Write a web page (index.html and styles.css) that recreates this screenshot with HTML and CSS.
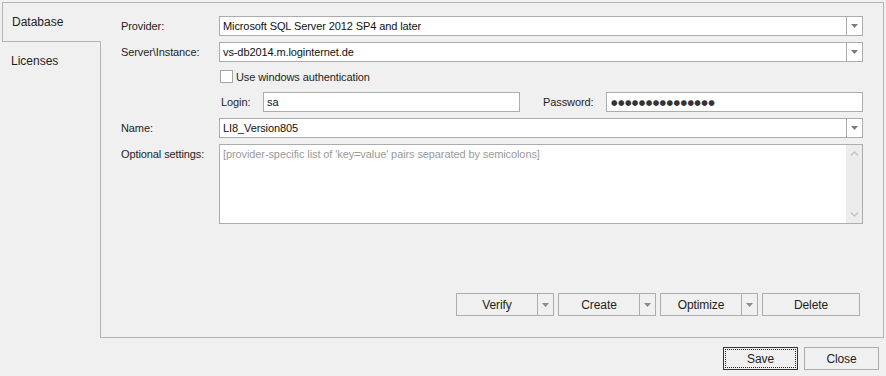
FILE: index.html
```html
<!DOCTYPE html>
<html lang="en">

<head>
  <meta charset="UTF-8" />
  <meta name="viewport" content="width=device-width,initial-scale=1" />
  <title>Database Settings</title>
  <link rel="stylesheet" href="styles.css">
</head>

<body>
  <div class="dialog">
    <div class="tabs">
      <div class="tab-list">
        <div class="tab active">Database</div>
        <div class="tab-rest">
          <div class="tab">Licenses</div>
        </div>
      </div>
      <div class="tab-page">
        <div class="form">
          <div class="row">
            <span class="lbl">Provider:</span>
            <div class="combo">
              <span class="combo-text">Microsoft SQL Server 2012 SP4 and later</span>
              <span class="combo-btn"><svg width="7" height="4" viewBox="0 0 7 4"><path d="M0 0h7L3.5 4z" fill="#7a7a7a" /></svg></span>
            </div>
          </div>
          <div class="row">
            <span class="lbl">Server\Instance:</span>
            <div class="combo">
              <span class="combo-text">vs-db2014.m.loginternet.de</span>
              <span class="combo-btn"><svg width="7" height="4" viewBox="0 0 7 4"><path d="M0 0h7L3.5 4z" fill="#7a7a7a" /></svg></span>
            </div>
          </div>
          <div class="row row-check">
            <span class="checkbox"></span>
            <span class="check-text">Use windows authentication</span>
          </div>
          <div class="row row-login">
            <span class="sub-lbl">Login:</span>
            <div class="field">sa</div>
            <span class="sub-lbl pw-lbl">Password:</span>
            <div class="field pw"><span class="dots">●●●●●●●●●●●●●●●</span></div>
          </div>
          <div class="row">
            <span class="lbl">Name:</span>
            <div class="combo">
              <span class="combo-text">LI8_Version805</span>
              <span class="combo-btn"><svg width="7" height="4" viewBox="0 0 7 4"><path d="M0 0h7L3.5 4z" fill="#7a7a7a" /></svg></span>
            </div>
          </div>
          <div class="row row-memo">
            <span class="lbl">Optional settings:</span>
            <div class="memo">
              <span class="memo-text">[provider-specific list of 'key=value' pairs separated by semicolons]</span>
              <span class="scroll">
                <svg width="9" height="5" viewBox="0 0 9 5"><path d="M1 4.5l3.5-3.5 3.5 3.5" fill="none" stroke="#c4c4c4" stroke-width="1.4" /></svg>
                <svg width="9" height="5" viewBox="0 0 9 5"><path d="M1 .5l3.5 3.5 3.5-3.5" fill="none" stroke="#c4c4c4" stroke-width="1.4" /></svg>
              </span>
            </div>
          </div>
        </div>
        <div class="actions">
          <div class="split">
            <span class="split-main">Verify</span>
            <span class="split-arrow"><svg width="7" height="4" viewBox="0 0 7 4"><path d="M0 0h7L3.5 4z" fill="#8a8a8a" /></svg></span>
          </div>
          <div class="split">
            <span class="split-main">Create</span>
            <span class="split-arrow"><svg width="7" height="4" viewBox="0 0 7 4"><path d="M0 0h7L3.5 4z" fill="#8a8a8a" /></svg></span>
          </div>
          <div class="split">
            <span class="split-main">Optimize</span>
            <span class="split-arrow"><svg width="7" height="4" viewBox="0 0 7 4"><path d="M0 0h7L3.5 4z" fill="#8a8a8a" /></svg></span>
          </div>
          <button class="btn btn-wide" type="button">Delete</button>
        </div>
      </div>
    </div>
    <div class="footer">
      <button class="btn btn-default" type="button">Save</button>
      <button class="btn" type="button">Close</button>
    </div>
  </div>
</body>

</html>
```

FILE: styles.css
```css
* {
  box-sizing: border-box;
  margin: 0;
  padding: 0;
}

body {
  font-family: "Liberation Sans", Arial, sans-serif;
  font-size: 11px;
  letter-spacing: -0.1px;
  color: #1e1e1e;
  background: #f0f0f0;
  width: 886px;
  height: 376px;
  overflow: hidden;
}

.dialog {
  padding: 2px 2px 0 2px;
}

.tabs {
  display: flex;
  height: 336px;
}

/* left tab strip */
.tab-list {
  width: 99px;
  display: flex;
  flex-direction: column;
}

.tab {
  font-size: 12px;
  letter-spacing: 0;
  padding-left: 9px;
  display: flex;
  align-items: center;
  height: 38px;
}

.tab.active {
  height: 40px;
  border: 1px solid #b4b4b4;
  border-right: none;
}

.tab-rest {
  flex: 1;
  border-right: 1px solid #b4b4b4;
}

.tab-page {
  flex: 1;
  border: 1px solid #b4b4b4;
  border-left: none;
  padding: 13px 20px 21px 20px;
  display: flex;
  flex-direction: column;
}

/* form rows */
.form {
  display: flex;
  flex-direction: column;
}

.row {
  display: flex;
  align-items: center;
  height: 20px;
  margin-top: 6px;
}

.row:first-child {
  margin-top: 0;
}

.lbl {
  width: 98px;
  flex: none;
}

.combo,
.field,
.memo {
  flex: 1;
  height: 100%;
  background: #fff;
  border: 1px solid #acacac;
  display: flex;
  align-items: center;
}

.combo-text {
  flex: 1;
  padding-left: 3px;
  color: #111;
  white-space: nowrap;
}

.combo-btn {
  width: 16px;
  height: 100%;
  border-left: 1px solid #acacac;
  display: flex;
  align-items: center;
  justify-content: center;
}

.row-check {
  height: 13px;
  margin-top: 8px;
  padding-left: 99px;
}

.checkbox {
  width: 13px;
  height: 13px;
  background: #fff;
  border: 1px solid #a4a4a4;
}

.check-text {
  margin-left: 3px;
}

.row-login {
  margin-top: 9px;
  padding-left: 98px;
}

.sub-lbl {
  width: 44px;
  padding-left: 2px;
  flex: none;
}

.pw-lbl {
  width: 86px;
  padding-left: 23px;
}

.field {
  flex: none;
  width: 257px;
  padding-left: 3px;
  color: #111;
}

.field.pw {
  flex: 1;
  width: auto;
  padding-left: 4px;
}

.dots {
  font-family: "DejaVu Sans", sans-serif;
  font-size: 7.5px;
  letter-spacing: 0.4px;
  color: #333;
}

.row-memo {
  height: 80px;
  align-items: flex-start;
}

.row-memo .lbl {
  padding-top: 4px;
}

.memo {
  align-items: stretch;
}

.memo-text {
  flex: 1;
  padding: 3px 3px;
  color: #9a9a9a;
}

.scroll {
  width: 16px;
  background: #ececec;
  display: flex;
  flex-direction: column;
  align-items: center;
  justify-content: space-between;
  padding: 6px 0 6px;
}

/* buttons */
.actions {
  margin-top: auto;
  display: flex;
  justify-content: flex-end;
  gap: 4px;
  padding-right: 3px;
}

.split,
.btn {
  height: 23px;
  border: 1px solid #adadad;
  background: #f0f0f0;
  font-family: inherit;
  font-size: 12px;
  letter-spacing: -0.1px;
  color: #1e1e1e;
}

.split {
  width: 98px;
  display: flex;
}

.split-main {
  flex: 1;
  display: flex;
  align-items: center;
  justify-content: center;
}

.split-arrow {
  width: 16px;
  border-left: 1px solid #adadad;
  display: flex;
  align-items: center;
  justify-content: center;
}

.btn {
  width: 75px;
}

.btn-wide {
  width: 98px;
}

.btn-default {
  border-color: #333;
  outline: 1px dotted #222;
  outline-offset: -3px;
}

.footer {
  display: flex;
  justify-content: flex-end;
  gap: 6px;
  margin-top: 9px;
  padding-right: 5px;
}
```
